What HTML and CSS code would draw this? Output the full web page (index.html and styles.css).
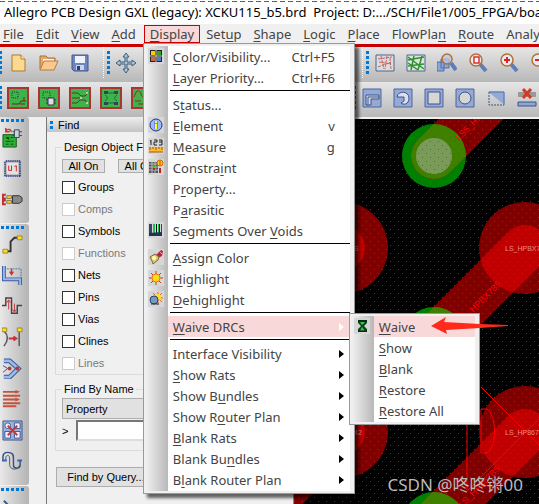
FILE: index.html
```
<!DOCTYPE html>
<html lang="en">
<head>
  <meta charset="UTF-8">
  <meta name="viewport" content="width=device-width, initial-scale=1.0">
  <title>Allegro PCB Design GXL</title>
  <link rel="stylesheet" href="styles.css">
</head>
<body>
  <div class="app">
    <header class="titlebar">
      <svg class="logo" width="15" height="16" viewBox="0 0 15 16">
        <path d="M0 2l4-1 3 4 4-2 3 1-3 4 4 4-2 3-5-1-3 1-5-2z" fill="#0d2a0d"/>
        <path d="M0 1l3 2 2 4-3 3M9 14l4 0 1-3M8 6l3-2 3 1" stroke="#0c0" stroke-width="2" fill="none"/>
        <path d="M0 7h4l3-3M3 13l4-5 5-4M7 9l4 4M0 14l3-3" stroke="#e11" stroke-width="2" fill="none"/>
        <path d="M5 7l3 4M9 7l2 3" stroke="#fff" fill="none"/>
      </svg>
      <span class="title">Allegro PCB Design GXL (legacy): XCKU115_b5.brd&nbsp; Project: D:.../SCH/File1/005_FPGA/boa</span>
    </header>

    <nav class="menubar">
      <button><u>F</u>ile</button>
      <button><u>E</u>dit</button>
      <button><u>V</u>iew</button>
      <button><u>A</u>dd</button>
      <div class="menu-wrap">
        <button class="open"><u>D</u>isplay</button>
        <div class="menu main-menu">
          <button class="item">
            <svg class="ico" viewBox="0 0 16 16"><path d="M2 2h12v12H2z" fill="#222"/><path d="M3 3h4v4H3z" fill="#fc0"/><path d="M9 3h4v4H9z" fill="#2a2"/><path d="M3 9h4v4H3z" fill="#c64"/><path d="M9 9h4v4H9z" fill="#57c"/><path d="M8 1v14M1 8h14" stroke="#ccc"/></svg>
            <span><u>C</u>olor/Visibility...</span><kbd>Ctrl+F5</kbd></button>
          <button class="item"><span><u>L</u>ayer Priority...</span><kbd>Ctrl+F6</kbd></button>
          <hr>
          <button class="item"><span>S<u>t</u>atus...</span></button>
          <button class="item">
            <svg class="ico" viewBox="0 0 16 16"><circle cx="8" cy="8" r="6" fill="#9bf" stroke="#238" stroke-width="1"/><path d="M6 4h4v8H6z" fill="#78d"/><path d="M7 4h2v2H7zM7 7h2v5H7z" fill="#ff3"/></svg>
            <span><u>E</u>lement</span><kbd>v</kbd></button>
          <button class="item">
            <svg class="ico" viewBox="0 0 16 16"><path d="M3 2v5M2 3h1M6 2h3v2H6v3h3M11 2h3v5h-3M11 4h3" stroke="#222" fill="none"/><path d="M1 9h14v5H1z" fill="#fb3"/><path d="M1 14h14M2 9v3M5 9v2M8 9v3M11 9v2M14 9v3" stroke="#a50"/></svg>
            <span><u>M</u>easure</span><kbd>g</kbd></button>
          <button class="item">
            <svg class="ico" viewBox="0 0 16 16"><path d="M1 3h9v11H1z" fill="#555"/><path d="M1 5h9M1 8h9M1 11h9M4 3v11M7 3v11" stroke="#bbb"/><path d="M5 6h2v2H5z" fill="#2b2"/><path d="M5 9h2v2H5zM11 9h2v5h-2z" fill="#b22"/><circle cx="12" cy="4" r="3" fill="#fc2" stroke="#c60"/><path d="M12 2v4" stroke="#c30"/></svg>
            <span>Constra<u>i</u>nt</span></button>
          <button class="item"><span>P<u>r</u>operty...</span></button>
          <button class="item"><span>P<u>a</u>rasitic</span></button>
          <button class="item">
            <svg class="ico" viewBox="0 0 16 16"><path d="M1 2h3v10H1zM13 2h1v10h-1z" fill="#346"/><path d="M5 2h2v10H5zM10 2h1v10h-1z" fill="#2b5"/><path d="M8 2h1v10H8zM11 2h1v10h-1z" fill="#111"/><path d="M1 11l13-1v4H1z" fill="#235"/></svg>
            <span>Segments Over <u>V</u>oids</span></button>
          <hr>
          <button class="item">
            <svg class="ico" viewBox="0 0 16 16"><path d="M8 6l5-5 2 1-1 5-4 2z" fill="#b24"/><path d="M12 3l2 2" stroke="#eaa"/><path d="M2 8l5-3 4 3-1 3-5 4-1-3z" fill="#dc6" stroke="#863"/><circle cx="6" cy="9" r="2" fill="#ffc"/></svg>
            <span><u>A</u>ssign Color</span></button>
          <button class="item">
            <svg class="ico" viewBox="0 0 16 16"><path d="M8 1v14M1 8h14M3 3l10 10M13 3L3 13" stroke="#b41"/><circle cx="8" cy="8" r="4" fill="#fd1" stroke="#e72"/></svg>
            <span><u>H</u>ighlight</span></button>
          <button class="item">
            <svg class="ico" viewBox="0 0 16 16"><path d="M10 1v13M3 7h12M5 2l9 9M14 2L5 11" stroke="#d62"/><circle cx="10" cy="6" r="3" fill="#fd3"/><circle cx="6" cy="9" r="4" fill="#79b" stroke="#247"/><path d="M3 13h8" stroke="#235"/></svg>
            <span><u>D</u>ehighlight</span></button>
          <hr>
          <div class="sub-wrap">
            <button class="item more active"><span><u>W</u>aive DRCs</span></button>
            <div class="menu sub-menu">
              <button class="item active">
                <svg class="ico" viewBox="0 0 16 16"><path d="M4 2h9v3l-3 3 3 3v3H4v-3l3-3-3-3z" fill="#142"/><path d="M6 4h5L8 7zM8 9l3 4H6z" fill="#3c4"/><path d="M4 3h9M4 13h9" stroke="#111"/></svg>
                <span><u>W</u>aive</span>
              </button>
              <button class="item"><span><u>S</u>how</span></button>
              <button class="item"><span><u>B</u>lank</span></button>
              <button class="item"><span><u>R</u>estore</span></button>
              <button class="item"><span><u>R</u>estore All</span></button>
              <svg class="pointer" width="78" height="20" viewBox="0 0 78 20"><path d="M0 10L15 1l-2 5 36 2 28 1v1l-28 2-34 2 1 4z" fill="#ff2a1a"/></svg>
            </div>
          </div>
          <hr>
          <button class="item more"><span>Interface Visibility</span></button>
          <button class="item more"><span><u>S</u>how Rats</span></button>
          <button class="item more"><span>Show B<u>u</u>ndles</span></button>
          <button class="item more"><span>Show R<u>o</u>uter Plan</span></button>
          <button class="item more"><span><u>B</u>lank Rats</span></button>
          <button class="item more"><span>Blank Bu<u>n</u>dles</span></button>
          <button class="item more"><span>B<u>l</u>ank Router Plan</span></button>
        </div>
      </div>
      <button>Set<u>u</u>p</button>
      <button><u>S</u>hape</button>
      <button><u>L</u>ogic</button>
      <button><u>P</u>lace</button>
      <button>FlowPla<u>n</u></button>
      <button><u>R</u>oute</button>
      <button>Analy<u>z</u>e</button>
    </nav>

    <div class="toolbar">
      <div class="tools file-tools">
        <button aria-label="New"><svg viewBox="0 0 20 20"><path d="M4 2h9l4 4v12H4z" fill="#fbd98f" stroke="#a97a3c"/><path d="M13 2v4h4" fill="#fff0c8" stroke="#a97a3c"/></svg></button>
        <button aria-label="Open"><svg viewBox="0 0 20 20"><path d="M1 16V3h6l2 2h7v4" fill="#e9a866" stroke="#a8703c"/><path d="M4 6h11v5H4z" fill="#f4f4f4"/><path d="M1 17L5 8h14l-4 9z" fill="#fbc98d" stroke="#b87b42"/></svg></button>
        <button aria-label="Save"><svg viewBox="0 0 20 20"><path d="M2 2h16v16H4l-2-2z" fill="#6d86bd" stroke="#3e5791"/><path d="M5 3h10v7H5z" fill="#eef1f7"/><path d="M6 12h8v5H6z" fill="#cfd4de"/><path d="M7 13h3v4H7z" fill="#2c3f6d"/></svg></button>
      </div>
      <div class="tools edit-tools">
        <button aria-label="Move"><svg viewBox="0 0 20 20"><path d="M10 0l3 4h-2v5h5V7l4 3-4 3v-2h-5v5h2l-3 4-3-4h2v-5H4v2l-4-3 4-3v2h5V4H7z" fill="#a9c4d8" stroke="#3f5d7c"/></svg></button>
      </div>
      <div class="tools">
        <button aria-label="Unrats all"><svg viewBox="0 0 20 20"><path d="M1 2h18v16H1z" fill="#dcdcdc" stroke="#4a6592"/><path d="M3 6l14-2M4 9l12 2M3 14l13-5M6 3l3 13M12 3l-2 13M15 5l1 11" stroke="#b66" stroke-dasharray="3 1"/></svg></button>
        <button aria-label="Rats all"><svg viewBox="0 0 20 20"><path d="M1 2h18v16H1z" fill="#dde3dd" stroke="#4a6592"/><path d="M2 7l16-3M2 4l16 12M2 13l16-2M5 17L8 3M12 17l4-14M2 10l10 7" stroke="#2d9130" stroke-width="1.5"/></svg></button>
        <button aria-label="Zoom area"><svg viewBox="0 0 20 20"><path d="M0 9h7v9H0zM4 6h8v9H4z" fill="#8ca5d6" stroke="#506ca5"/><path d="M14 10l5 7" stroke="#5f7db8" stroke-width="4"/><circle cx="10" cy="6" r="5" fill="#b9c9e8" fill-opacity=".7" stroke="#b8702f" stroke-width="1.5"/></svg></button>
        <button aria-label="Zoom fit"><svg viewBox="0 0 20 20"><path d="M12 11l6 7" stroke="#5f7db8" stroke-width="4"/><circle cx="8" cy="7" r="6" fill="#e5eaf4" stroke="#b8702f" stroke-width="1.5"/><path d="M6 4h5v6H6z" fill="#fff" stroke="#d33" stroke-width="1.5"/></svg></button>
        <button aria-label="Zoom in"><svg viewBox="0 0 20 20"><path d="M12 11l6 7" stroke="#5f7db8" stroke-width="4"/><circle cx="8" cy="7" r="6" fill="#e5eaf4" stroke="#b8702f" stroke-width="1.5"/><path d="M8 4v6M5 7h6" stroke="#d22" stroke-width="2"/></svg></button>
        <button aria-label="Zoom out"><svg viewBox="0 0 20 20"><path d="M12 11l6 7" stroke="#5f7db8" stroke-width="4"/><circle cx="8" cy="7" r="6" fill="#e5eaf4" stroke="#b8702f" stroke-width="1.5"/><path d="M5 7h6" stroke="#d22" stroke-width="2"/></svg></button>
      </div>
    </div>

    <div class="toolbar">
      <div class="tools mode-tools">
        <button aria-label="General edit"><svg class="mode" viewBox="0 0 22 22"><path d="M1 1h20v20H1z" fill="#3fb24a" stroke="#a33" stroke-width="2"/><path d="M5 5h6v6H5z" fill="none" stroke="#143" stroke-dasharray="1 1"/><path d="M5 17h7l2-3h5M13 17h5M17 10v4" stroke="#722" fill="none"/></svg></button>
        <button aria-label="Placement edit"><svg class="mode" viewBox="0 0 22 22"><path d="M1 1h20v20H1z" fill="#3fb24a" stroke="#a33" stroke-width="2"/><path d="M5 5h7v6H5z" fill="none" stroke="#143" stroke-dasharray="1 1"/><path d="M10 11h6v7h-6z" fill="#dde" stroke="#334"/><path d="M8 13h2M8 16h2M16 13h2M16 16h2" stroke="#334"/></svg></button>
        <button aria-label="Etch edit"><svg class="mode" viewBox="0 0 22 22"><path d="M1 1h20v20H1z" fill="#3fb24a" stroke="#a33" stroke-width="2"/><path d="M3 6h6l3 3h4l3-3M3 11h8M3 16h5l3-3h5l2 3" stroke="#632" fill="none"/><circle cx="18" cy="6" r="1" fill="#ddd"/><circle cx="12" cy="11" r="1" fill="#ddd"/><circle cx="18" cy="16" r="1" fill="#ddd"/></svg></button>
        <button aria-label="Flow plan"><svg class="mode" viewBox="0 0 22 22"><path d="M1 1h20v20H1z" fill="#3fb24a" stroke="#a33" stroke-width="2"/><path d="M7 6h8M7 16h8M5 8c3 2 3 4 0 6M17 8c-3 2-3 4 0 6" stroke="#165" fill="none"/><path d="M4 4h4v3H4zM14 4h4v3h-4zM4 15h4v3H4zM14 15h4v3h-4z" fill="#345"/></svg></button>
        <button aria-label="Signal integrity"><svg class="mode" viewBox="0 0 22 22"><path d="M1 1h20v20H1z" fill="#3fb24a" stroke="#a33" stroke-width="2"/><path d="M3 10c3-8 5-8 7-3s4 4 8-3M4 14h6M7 17h10" stroke="#922" fill="none"/></svg></button>
      </div>
      <div class="tools">
        <button aria-label="Shape"><svg viewBox="0 0 20 20"><path d="M1 1h18v18H1z" fill="#94a9d4" stroke="#4c659d"/><path d="M4 17V7h13v4H9v6z" fill="#d4d8e2" stroke="#3b538b"/><path d="M6 17V9h11" stroke="#3b538b" fill="none"/></svg></button>
        <button aria-label="Shape arc"><svg viewBox="0 0 20 20"><path d="M1 1h18v18H1z" fill="#94a9d4" stroke="#4c659d"/><path d="M4 9c1-7 12-6 12 1s-6 7-8 5l3-2V9z" fill="#dde" stroke="#3b538b"/></svg></button>
        <button aria-label="Rectangle"><svg viewBox="0 0 20 20"><path d="M1 1h18v18H1z" fill="#94a9d4" stroke="#4c659d"/><path d="M4 4h12v12H4z" fill="#d6d6d6" stroke="#3b538b"/></svg></button>
        <button aria-label="Circle"><svg viewBox="0 0 20 20"><path d="M1 1h18v18H1z" fill="#94a9d4" stroke="#4c659d"/><circle cx="10" cy="10" r="6" fill="#d6d6d6" stroke="#3b538b"/></svg></button>
        <button aria-label="Select shape"><svg viewBox="0 0 20 20"><path d="M3 4h15v12z" fill="#93a9d6" stroke="#93a9d6"/><path d="M3 4h15v13" fill="none" stroke="#5670a8"/><path d="M3 4v13h15" fill="none" stroke="#3b538b" stroke-dasharray="2 1"/></svg></button>
        <button aria-label="Delete islands"><svg viewBox="0 0 20 20"><path d="M1 4h18v5H1z" fill="#999"/><path d="M1 14h18v4H1z" fill="#8fa6d4" stroke="#3b538b"/><path d="M6 1l8 9M14 1l-8 9" stroke="#d43a28" stroke-width="3"/></svg></button>
      </div>
    </div>

    <main class="work">
      <aside class="sidebar">
        <div class="side-tools">
          <button aria-label="Place manual"><svg viewBox="0 0 22 22"><path d="M1 8h14v13H1z" fill="#2fae35" stroke="#155e1a"/><path d="M4 11h3v2M9 11h3M4 15h5M10 15h2M4 18h3M9 18h3" stroke="#0c5010"/><path d="M4 4c3-3 5-1 6 1M4 1v4h4" stroke="#c33" stroke-width="1.5" fill="none"/><path d="M13 3h5v8h-5z" fill="#ccd3de" stroke="#345"/><path d="M11 5h2M11 9h2M18 5h3M18 9h3" stroke="#345"/></svg></button>
          <button aria-label="Component"><svg viewBox="0 0 22 22"><path d="M4 4h14v14H4z" fill="#e2e2e2" stroke="#778"/><path d="M4 3h15M4 19h15" stroke="#237" stroke-width="2" stroke-dasharray="1 1"/><path d="M3 4v15M19 4v15" stroke="#237" stroke-width="2" stroke-dasharray="1 1"/><path d="M7 8v5h3V8M13 9l2-1v6" stroke="#c22" fill="none"/></svg></button>
          <button aria-label="Pin swap"><svg viewBox="0 0 22 22"><path d="M4 6H1v4h3M4 12H1v4h3" stroke="#b33" stroke-width="2" fill="none"/><path d="M5 7h5v3H5zM5 12h5v3H5z" fill="#ec3" stroke="#875"/><path d="M11 7h7l3 2v4l-3 2h-7z" fill="#888" stroke="#333"/></svg></button>
        </div>
        <div class="side-tools">
          <button aria-label="Add connect"><svg viewBox="0 0 22 22"><path d="M4 18h5V8l4-4h4" stroke="#333" stroke-width="2" fill="none"/><path d="M16 2h5v4h-5zM1 16h5v4H1z" fill="#fd2" stroke="#983"/></svg></button>
          <button aria-label="Slide"><svg viewBox="0 0 22 22"><path d="M2 1v14h17v6" stroke="#3e5e9d" stroke-width="4" fill="none"/><path d="M2 1v14h17v6" stroke="#9db7e6" stroke-width="2" fill="none"/><path d="M5 4h15v10" stroke="#57a" fill="none" stroke-dasharray="2 1"/><path d="M10 4v6M8 7l2 3 2-3" stroke="#c33" fill="none" stroke-width="1.5"/></svg></button>
          <button aria-label="Delay tune"><svg viewBox="0 0 22 22"><path d="M0 10h4V2h6v16h6v-8h5" stroke="#444" stroke-width="1.5" fill="none"/><path d="M7 14V5M5 7l2-3 2 3M13 8v8M11 14l2 3 2-3" stroke="#c33" fill="none"/></svg></button>
          <button aria-label="Custom smooth"><svg viewBox="0 0 22 22"><path d="M2 4c5 5 5 10 0 16M18 4v16" stroke="#555" stroke-width="1.5" fill="none"/><path d="M7 12h7M12 10l3 2-3 2" stroke="#c33" stroke-width="2" fill="none"/><path d="M0 1h5v4H0zM16 1h5v4h-5z" fill="#fd2" stroke="#983"/></svg></button>
          <button aria-label="Spread"><svg viewBox="0 0 22 22"><path d="M2 3h6l9 8-9 9H2" stroke="#35568f" stroke-width="5" fill="none"/><path d="M2 3h6l9 8-9 9H2" stroke="#9bb9ec" stroke-width="3" fill="none"/><path d="M1 8l5 3-5 4" stroke="#35568f" fill="none"/><circle cx="8" cy="11" r="2" fill="#b33"/><circle cx="16" cy="11" r="2" fill="#b33"/></svg></button>
          <button aria-label="Bus route"><svg viewBox="0 0 22 22"><path d="M1 3h14M1 7h18M1 11h14M1 15h18M1 18h14" stroke="#c5533c" stroke-width="2"/><path d="M14 1l5 2-5 2M14 9l5 2-5 2" fill="#c5533c"/></svg></button>
          <button aria-label="Fanout"><svg viewBox="0 0 22 22"><path d="M1 1h20v20H1z" fill="#9fb2da" stroke="#3b5593"/><path d="M3 12h6v7H3zM13 12h6v7h-6zM13 3h6v6h-6z" fill="#eef" stroke="#3b5593"/><circle cx="6" cy="6" r="3" fill="#eef" stroke="#3b5593"/><path d="M6 6l10 10M16 6L6 16" stroke="#c33" stroke-width="2"/></svg></button>
          <button aria-label="Phase tune"><svg viewBox="0 0 22 22"><path d="M1 10V6c0-5 5-5 8-4s3 3 3 6v7c0 4 7 4 7 0v-5" stroke="#33508a" stroke-width="1.5" fill="none"/><path d="M4 10V7c0-3 4-3 4 0v7c0 7 10 6 10 1" stroke="#555" fill="none"/><path d="M0 9h5v2H0zM16 9h5v2h-5z" fill="#36b"/></svg></button>
        </div>
        <div class="side-tools">
          <button aria-label="Line"><svg viewBox="0 0 22 22"><path d="M2 5l10 10" stroke="#35568f" stroke-width="2"/></svg></button>
        </div>
      </aside>

      <section class="find">
        <h2>Find</h2>
        <fieldset class="objects">
          <legend>Design Object Find Filter</legend>
          <div class="row"><button class="small">All On</button><button class="small">All Off</button></div>
          <label><input type="checkbox">Groups</label>
          <label class="off"><input type="checkbox" disabled>Comps</label>
          <label><input type="checkbox">Symbols</label>
          <label class="off"><input type="checkbox" disabled>Functions</label>
          <label><input type="checkbox">Nets</label>
          <label><input type="checkbox">Pins</label>
          <label><input type="checkbox">Vias</label>
          <label><input type="checkbox">Clines</label>
          <label class="off"><input type="checkbox" disabled>Lines</label>
        </fieldset>
        <fieldset class="by-name">
          <legend>Find By Name</legend>
          <select aria-label="Find by"><option>Property</option></select>
          <div class="name-row"><label for="find-name">&gt;</label><input type="text" id="find-name"></div>
        </fieldset>
        <button class="query">Find by Query...</button>
      </section>

      <section class="board">
        <svg width="100%" height="100%">
          <defs>
            <pattern id="dots" width="8" height="8" patternUnits="userSpaceOnUse">
              <path d="M0 6h1v1H0zM4 2h1v1H4z" fill="#4c5a34" fill-opacity=".8"/>
            </pattern>
            <clipPath id="pads">
              <circle cx="48" cy="129" r="46"/><circle cx="231" cy="129" r="46"/>
              <circle cx="48" cy="313" r="46"/><circle cx="231" cy="313" r="46"/>
            </clipPath>
            <clipPath id="vias">
              <circle cx="140" cy="37" r="32"/><circle cx="140" cy="220" r="32"/><circle cx="140" cy="405" r="32"/>
            </clipPath>
            <path id="traces" d="M140 37L240-63M48 129L-43 220M231 129L140 220M48 313L-43 404M231 313L140 404"/>
          </defs>
          <g fill="#800000">
            <circle cx="48" cy="129" r="46"/><circle cx="231" cy="129" r="46"/>
            <circle cx="48" cy="313" r="46"/><circle cx="231" cy="313" r="46"/>
          </g>
          <g fill="#008000">
            <circle cx="140" cy="37" r="32"/><circle cx="140" cy="220" r="32"/><circle cx="140" cy="405" r="32"/>
          </g>
          <g fill="none" stroke-width="46" stroke-linecap="round">
            <use href="#traces" stroke="#800000"/>
            <use href="#traces" stroke="#c00000" clip-path="url(#pads)"/>
            <use href="#traces" stroke="#408000" clip-path="url(#vias)"/>
          </g>
          <g fill="#7a9a5a">
            <circle cx="140" cy="37" r="18"/><circle cx="140" cy="220" r="18"/><circle cx="140" cy="405" r="18"/>
          </g>
          <g fill="none" stroke="#f00">
            <path d="M173 300v71M187 268l60 60M187 290h6c9 6 11 36 0 44h-6zM247 298L173 372"/>
          </g>
          <rect width="100%" height="100%" fill="url(#dots)"/>
          <g class="net">
            <text x="211" y="132">LS_HPBX7</text>
            <text x="211" y="316">LS_HP867</text>
            <text x="56" y="132">7S</text>
            <text x="60" y="316">42</text>
          </g>
          <g class="net-red">
            <text transform="translate(168 205) rotate(-45)">LS_HPBX785</text>
            <text transform="translate(168 389) rotate(-45)">LS_HP867B5</text>
            <text transform="translate(165 22) rotate(-45)">LS5_HP</text>
          </g>
        </svg>
        <div class="watermark">CSDN @咚咚锵00</div>
      </section>
    </main>
  </div>
</body>
</html>
```
FILE: styles.css
```
* {
  box-sizing: border-box;
}
body {
  margin: 0;
  font-family: "Noto Sans", "Open Sans", sans-serif;
  font-size: 13px;
  color: #444;
  background: #f0f0f0;
}
button {
  font: inherit;
  color: inherit;
  background: none;
  border: 0;
  padding: 0;
  margin: 0;
}
svg {
  display: block;
}
u {
  text-underline-offset: 2px;
}
.app {
  display: flex;
  flex-direction: column;
  height: 100vh;
  overflow: hidden;
}

/* title and menu bar */
.titlebar {
  position: relative;
  display: flex;
  align-items: center;
  flex: none;
  gap: 4px;
  height: 24px;
  background: #fff;
  color: #000;
  white-space: nowrap;
}
.titlebar::before {
  content: "";
  position: absolute;
  top: 1px;
  left: 0;
  right: 0;
  height: 1px;
  background: repeating-linear-gradient(90deg, #0a74cc 0 5px, #fff 5px 8px);
}
.menubar {
  display: flex;
  flex: none;
  height: 23px;
  background: #f0f0f0;
  border-bottom: 3px solid #c80000;
}
.menubar > button, .open {
  height: 20px;
  padding: 0 6px;
  line-height: 20px;
}
.menubar > button:first-child {
  padding-left: 3px;
}
.menu-wrap {
  position: relative;
  margin-left: 2px;
}
.open {
  height: 18px;
  margin-top: 1px;
  padding: 0 5px;
  line-height: 16px;
  background: #f8d8d8;
  border: 1px solid #c00;
}

/* drop-down menus */
.menu {
  position: absolute;
  z-index: 5;
  padding: 2px 4px 3px 2px;
  border: 1px solid #999;
  background: linear-gradient(90deg, #f0f0f0 0, #b8b8b8 22px, #fff 22px) 2px 2px / calc(100% - 6px) calc(100% - 4px) no-repeat #f0f0f0;
}
.main-menu {
  top: 19px;
  left: -1px;
  width: 212px;
  box-shadow: 4px 4px 3px #0009;
}
.sub-menu {
  top: -3px;
  left: 203px;
  width: 131px;
}
.item {
  position: relative;
  display: flex;
  align-items: center;
  width: 100%;
  height: 21px;
  padding: 0 15px 0 27px;
  white-space: nowrap;
  text-align: left;
}
.item kbd {
  margin-left: auto;
  font: inherit;
}
.item.active {
  background: linear-gradient(#f8d8d8, #f8d8d8) 22px 0 no-repeat;
}
.item .ico {
  position: absolute;
  left: 2px;
  top: 2px;
  width: 16px;
  height: 16px;
  background: #d6d6d6;
}
.item.more::after {
  content: "";
  margin-left: auto;
  margin-right: -9px;
  border: 4px solid transparent;
  border-left: 5px solid #000;
  border-right: 0;
}
.item.more.active::after {
  border-left-color: #fff;
}
.menu hr {
  height: 1px;
  margin: 2px 0 3px 24px;
  border: 0;
  background: #000;
}
.sub-wrap {
  position: relative;
}
.pointer {
  position: absolute;
  left: 81px;
  top: 2px;
}

/* toolbars */
.toolbar {
  display: flex;
  flex: none;
  height: 35px;
  background: linear-gradient(#e6e6e6, #b8b8b8);
}
.tools {
  display: flex;
  align-items: center;
  height: 31px;
  padding-left: 3px;
  border-left: 1px dotted #fff;
}
.tools::before {
  content: "";
  width: 3px;
  height: 23px;
  background: repeating-linear-gradient(#0078d7 0 3px, transparent 3px 5px);
}
.tools:first-child {
  padding-left: 0;
  border-left: 0;
}
.tools:first-child::before {
  width: 2px;
}
.tools button {
  display: grid;
  place-items: center;
  width: 31px;
  height: 31px;
}
.tools svg {
  width: 20px;
  height: 20px;
}
.tools svg.mode {
  width: 22px;
  height: 22px;
}
.file-tools {
  flex: 0 0 103px;
}
.edit-tools {
  flex: 0 0 259px;
}
.mode-tools {
  flex: 0 0 349px;
}

/* left strip */
.work {
  display: flex;
  flex: 1;
  min-height: 0;
}
.sidebar {
  flex: 0 0 46px;
  overflow: hidden;
}
.side-tools {
  width: 29px;
  margin-bottom: 1px;
  padding: 2px 0 8px;
  background: linear-gradient(90deg, #e8e8e8, #b4b4b4);
  border-radius: 0 3px 3px 0;
}
.side-tools::before {
  content: "";
  display: block;
  width: 24px;
  height: 3px;
  margin-left: 1px;
  background: repeating-linear-gradient(90deg, #0078d7 0 3px, transparent 3px 5px);
}
.side-tools button {
  display: grid;
  place-items: center;
  width: 24px;
  height: 31px;
}
.side-tools svg {
  width: 21px;
  height: 21px;
}

/* find panel */
.find {
  flex: 0 0 248px;
  border-left: 1px solid #777;
  border-right: 1px solid #888;
  font-family: "Liberation Sans", Arial, sans-serif;
  font-size: 11px;
  color: #000;
}
.find h2 {
  display: flex;
  align-items: center;
  gap: 5px;
  height: 15px;
  margin: 0 0 8px;
  padding-left: 3px;
  background: linear-gradient(#eee, #c4c4c4);
  font-size: 11px;
  font-weight: normal;
}
.find h2::before {
  content: "";
  width: 3px;
  height: 8px;
  background: repeating-linear-gradient(#0078d7 0 3px, transparent 3px 5px);
}
.find fieldset {
  min-width: 0;
  margin: 0 8px;
  padding: 0 6px;
  border: 1px solid #dcdcdc;
}
.find legend {
  padding: 0 2px;
  line-height: 14px;
}
.row {
  display: flex;
  gap: 13px;
  margin: 5px 0 3px;
}
.small {
  width: 43px;
  height: 14px;
  line-height: 12px;
  background: #e1e1e1;
  border: 1px solid #adadad;
}
.objects label {
  display: flex;
  align-items: center;
  gap: 3px;
  height: 22px;
}
.objects label.off {
  color: #7a7a7a;
}
.objects input {
  appearance: none;
  width: 13px;
  height: 13px;
  margin: 0;
  background: #fff;
  border: 1px solid #333;
}
.objects input:disabled {
  border-color: #ccc;
}
.find .by-name {
  margin-top: 7px;
  padding-bottom: 9px;
}
.by-name select {
  display: block;
  width: 100%;
  height: 21px;
  margin-top: 2px;
  padding: 0 0 0 3px;
  appearance: none;
  font: inherit;
  background: #e1e1e1;
  border: 1px solid #adadad;
  border-radius: 0;
}
.name-row {
  display: flex;
  align-items: center;
  margin-top: 1px;
}
.name-row label {
  width: 14px;
}
.name-row input {
  flex: 1;
  min-width: 0;
  height: 21px;
  border: 2px solid #777;
  border-right-color: #eee;
  border-bottom-color: #ddd;
}
.query {
  width: 100px;
  height: 20px;
  margin: 16px 0 0 9px;
  background: #e1e1e1;
  border: 1px solid #adadad;
}

/* board view */
.board {
  position: relative;
  flex: 1;
  min-width: 0;
  margin-top: 2px;
  overflow: hidden;
  background: #000;
}
.net text, .net-red text {
  font-family: "Liberation Sans", Arial, sans-serif;
  font-size: 7px;
  fill: #e88;
}
.net-red text {
  font-size: 9px;
  fill: #f00;
}
.watermark {
  position: absolute;
  right: 16px;
  bottom: 8px;
  font: 17px/22px "Noto Sans", "Noto Sans CJK SC", sans-serif;
  color: #bbb;
  white-space: nowrap;
}
```
